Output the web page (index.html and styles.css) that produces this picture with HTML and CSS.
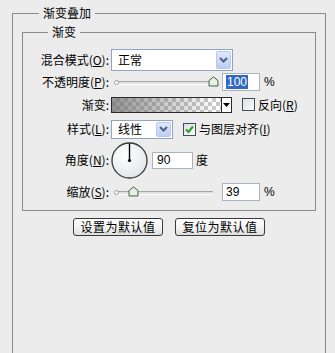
FILE: index.html
```html
<!DOCTYPE html>
<html lang="zh">
<head>
<meta charset="utf-8">
<title>渐变叠加</title>
<link rel="stylesheet" href="styles.css">
</head>
<body>
<fieldset class="outer">
  <legend class="outer-title">渐变叠加</legend>
  <fieldset class="inner">
    <legend class="inner-title">渐变</legend>
    <div class="form">
      <div class="label">混合模式(<u>O</u>):</div>
      <div class="ctl">
        <div class="combo combo-mode">
          <span class="combo-text">正常</span>
          <span class="combo-btn"><svg width="9" height="6" viewBox="0 0 9 6"><path d="M1 1 L4.5 4.5 L8 1" fill="none" stroke="#4d6185" stroke-width="2"/></svg></span>
        </div>
      </div>

      <div class="label">不透明度(<u>P</u>):</div>
      <div class="ctl">
        <div class="slider">
          <span class="track"><span class="cap"></span></span>
          <span class="thumb" style="left:93px"><svg width="11" height="11" viewBox="0 0 11 11"><path d="M1 4.5 L5.5 0.8 L10 4.5 L10 10 L1 10 Z" fill="#cfe0c9" stroke="#55605a" stroke-width="1"/><path d="M2 5 L5.5 2 L9 5 L9 9 L2 9 Z" fill="#e7f1e3"/></svg></span>
        </div>
        <div class="num num-a"><span class="sel">100</span></div>
        <span class="unit">%</span>
      </div>

      <div class="label">渐变:</div>
      <div class="ctl">
        <div class="swatch"></div>
        <div class="swatch-arrow"><svg width="7" height="4" viewBox="0 0 7 4"><path d="M0 0 H7 L3.5 4 Z" fill="#000"/></svg></div>
        <span class="check"></span>
        <span class="check-label">反向(<u>R</u>)</span>
      </div>

      <div class="label">样式(<u>L</u>):</div>
      <div class="ctl">
        <div class="combo combo-style">
          <span class="combo-text">线性</span>
          <span class="combo-btn"><svg width="9" height="6" viewBox="0 0 9 6"><path d="M1 1 L4.5 4.5 L8 1" fill="none" stroke="#4d6185" stroke-width="2"/></svg></span>
        </div>
        <span class="check checked"><svg width="11" height="11" viewBox="0 0 11 11"><path d="M2 5.5 L4.5 8 L9 2.5" fill="none" stroke="#21a121" stroke-width="2"/></svg></span>
        <span class="check-label">与图层对齐(<u>I</u>)</span>
      </div>

      <div class="label">角度(<u>N</u>):</div>
      <div class="ctl">
        <svg class="dial" width="37" height="37" viewBox="0 0 37 37">
          <defs>
            <radialGradient id="dg" cx="40%" cy="35%" r="70%">
              <stop offset="0" stop-color="#ffffff"/>
              <stop offset="1" stop-color="#e2e4e6"/>
            </radialGradient>
          </defs>
          <circle cx="18.5" cy="18.5" r="17.5" fill="url(#dg)" stroke="#3a3a3a" stroke-width="1.3"/>
          <line x1="18.5" y1="18.5" x2="18.5" y2="1.5" stroke="#000" stroke-width="1.4"/>
          <circle cx="18.5" cy="18.5" r="1.6" fill="#000"/>
        </svg>
        <div class="num num-b">90</div>
        <span class="unit">度</span>
      </div>

      <div class="label">缩放(<u>S</u>):</div>
      <div class="ctl">
        <div class="slider">
          <span class="track"><span class="cap"></span></span>
          <span class="thumb" style="left:13px"><svg width="11" height="11" viewBox="0 0 11 11"><path d="M1 4.5 L5.5 0.8 L10 4.5 L10 10 L1 10 Z" fill="#cfe0c9" stroke="#55605a" stroke-width="1"/><path d="M2 5 L5.5 2 L9 5 L9 9 L2 9 Z" fill="#e7f1e3"/></svg></span>
        </div>
        <div class="num num-a">39</div>
        <span class="unit">%</span>
      </div>
    </div>
  </fieldset>
  <div class="buttons">
    <button class="btn" type="button">设置为默认值</button>
    <button class="btn" type="button">复位为默认值</button>
  </div>
</fieldset>
</body>
</html>
```

FILE: styles.css
```css
html, body {
  margin: 0;
  height: 353px;
  overflow: hidden;
}
body {
  background: #ececec;
  font: 12px/16px "Noto Sans CJK SC", "Liberation Sans", sans-serif;
  color: #000;
  padding-top: 5px;
  box-sizing: border-box;
}
u {
  text-decoration: underline;
  text-underline-offset: 1px;
}
.outer {
  margin: 0 0 0 12px;
  padding: 0;
  width: 314px;
  height: 348px;
  box-sizing: border-box;
  border: 1px solid #8a8a8a;
  border-bottom: none;
  min-width: 0;
}
.outer-title {
  margin-left: 26px;
  padding: 0 4px;
  line-height: 16px;
}
.inner {
  margin: 3px 0 0 9px;
  padding: 0;
  width: 294px;
  height: 187px;
  box-sizing: border-box;
  border: 1px solid #8a8a8a;
  min-width: 0;
}
.inner-title {
  margin-left: 25px;
  padding: 0 4px;
  line-height: 16px;
}
.form {
  display: grid;
  grid-template-columns: 86px 1fr;
  grid-template-rows: 23px 22px 23px 26px 36px 28px;
  column-gap: 2px;
  align-items: center;
  padding-top: 8px;
}
.label {
  text-align: right;
  white-space: nowrap;
}
.ctl {
  display: flex;
  align-items: center;
  height: 100%;
}

/* combo boxes */
.combo {
  display: flex;
  align-items: stretch;
  box-sizing: border-box;
  border: 1px solid #8ea4c1;
  background: #fff;
}
.combo-mode { width: 122px; height: 22px; }
.combo-style { width: 62px; height: 19px; }
.combo-text {
  flex: 1;
  padding-left: 6px;
  display: flex;
  align-items: center;
}
.combo-btn {
  width: 15px;
  margin: 1px;
  box-sizing: border-box;
  border: 1px solid #b8c9ee;
  border-radius: 2px;
  background: linear-gradient(#dfe8fb, #bccdf3);
  display: flex;
  align-items: center;
  justify-content: center;
}

/* sliders */
.slider {
  position: relative;
  width: 98px;
  height: 12px;
  margin-left: 4px;
}
.track {
  position: absolute;
  left: 0;
  right: 0;
  top: 5px;
  height: 2px;
  border-top: 1px solid #a8a8a8;
  border-bottom: 1px solid #fff;
  background: #e2e2e2;
}
.cap {
  position: absolute;
  left: -1px;
  top: -2px;
  width: 3px;
  height: 3px;
  border: 1px solid #9a9a9a;
  border-radius: 50%;
  background: #fff;
}
.thumb {
  position: absolute;
  top: 0;
  width: 11px;
  height: 11px;
  display: block;
}
.thumb svg { display: block; }

/* numeric fields */
.num {
  box-sizing: border-box;
  background: #fff;
  border: 1px solid #a9b3bf;
  font: 12px/14px "Liberation Sans", "DejaVu Sans", sans-serif;
  display: flex;
  align-items: center;
  padding-left: 3px;
}
.num-a {
  width: 38px;
  height: 18px;
  margin-left: 9px;
}
.num-b {
  width: 41px;
  height: 17px;
  margin-left: 4px;
  padding-left: 4px;
}
.sel {
  background: #316ac5;
  color: #fff;
  padding: 0 1px;
  line-height: 14px;
}
.unit {
  margin-left: 4px;
  font-family: "Liberation Sans", "Noto Sans CJK SC", sans-serif;
}
.num-b + .unit { margin-left: 3px; font-family: "Noto Sans CJK SC", sans-serif; }

/* gradient swatch */
.swatch {
  width: 111px;
  height: 16px;
  box-sizing: border-box;
  border: 1px solid #2a2a2a;
  background:
    linear-gradient(to right, rgba(110,110,110,0.75), rgba(110,110,110,0) 95%),
    repeating-conic-gradient(#c9c9c9 0 25%, #ffffff 0 50%) 0 0 / 8px 8px;
}
.swatch-arrow {
  width: 10px;
  height: 16px;
  box-sizing: border-box;
  border: 1px solid #2a2a2a;
  border-left: none;
  background: #fff;
  display: flex;
  align-items: center;
  justify-content: center;
}

/* checkboxes */
.check {
  width: 13px;
  height: 13px;
  box-sizing: border-box;
  border: 1px solid #3f4d5e;
  background: linear-gradient(135deg, #dcdfe2, #fbfbfb);
  margin-left: 10px;
  display: flex;
  align-items: center;
  justify-content: center;
}
.check-label {
  margin-left: 3px;
  white-space: nowrap;
}

/* dial */
.dial { display: block; }

/* buttons */
.buttons {
  display: flex;
  justify-content: center;
  gap: 12px;
  margin-top: 7px;
}
.btn {
  width: 90px;
  height: 18px;
  padding: 0;
  box-sizing: border-box;
  border: 1px solid #3a3a3a;
  border-radius: 3px;
  background: linear-gradient(#ffffff, #f1f1f1 60%, #dedede);
  font: 12px/16px "Noto Sans CJK SC", sans-serif;
  color: #000;
  letter-spacing: 0.5px;
}
```
